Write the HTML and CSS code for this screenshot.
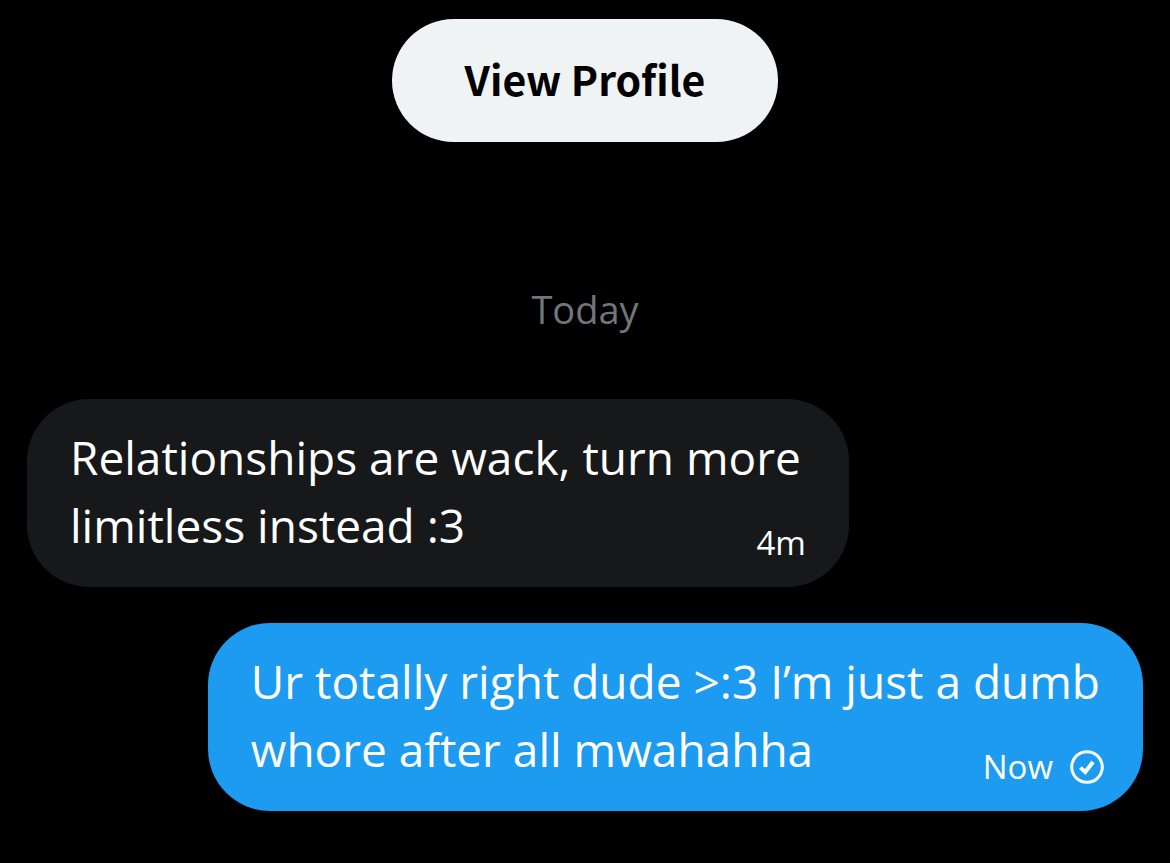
FILE: index.html
```html
<!DOCTYPE html>
<html lang="en">
<head>
<meta charset="utf-8">
<meta name="viewport" content="width=device-width, initial-scale=1">
<title>Conversation</title>
<link rel="stylesheet" href="styles.css">
</head>
<body>
<main class="chat">
  <button class="profile-button" type="button">View Profile</button>
  <h2 class="day">Today</h2>
  <section class="thread" aria-label="Messages">
    <article class="message received">
      <p class="text">Relationships are wack, turn more<br>limitless instead :3</p>
      <footer class="meta"><time>4m</time></footer>
    </article>
    <article class="message sent">
      <p class="text">Ur totally right dude &gt;:3 I’m just a dumb<br>whore after all mwahahha</p>
      <footer class="meta">
        <time>Now</time>
        <svg class="status" viewBox="0 0 36 36" role="img" aria-label="Sent">
          <circle cx="18" cy="18" r="15.3"/>
          <path d="M11.4 18.6l4.8 4.4 7.8-10"/>
        </svg>
      </footer>
    </article>
  </section>
</main>
</body>
</html>
```
FILE: styles.css
```css
* {
  box-sizing: border-box;
}

body {
  margin: 0;
  background: #000;
  color: #fff;
  font-family: "Open Sans", "Noto Sans", sans-serif;
}

.chat {
  display: flex;
  flex-direction: column;
  align-items: center;
  padding: 19px 27px 52px;
}

.profile-button {
  padding: 30px 73px 34px;
  border: 0;
  border-radius: 62px;
  background: #eff3f4;
  color: #000;
  font: 700 41px/59px "Noto Sans CJK SC", "Noto Sans", sans-serif;
}

.day {
  margin: 137px 0 60px;
  color: #71767b;
  font-size: 38px;
  font-weight: 400;
  line-height: 60px;
}

.thread {
  display: flex;
  flex-direction: column;
  gap: 36px;
  width: 100%;
}

.message {
  display: grid;
  padding: 24px 43px 26px;
  border-radius: 62px;
}

.received {
  align-self: flex-start;
  background: #16181a;
}

.sent {
  align-self: flex-end;
  padding-right: 38px;
  background: #1d9bf0;
}

.text,
.meta {
  grid-area: 1 / 1;
}

.text {
  margin: 0;
  padding: 0 5px 2px 0;
  font-size: 46px;
  line-height: 68px;
}

.meta {
  display: flex;
  align-items: center;
  align-self: end;
  justify-self: end;
  gap: 16px;
  font-size: 33px;
  line-height: 36px;
}

.status {
  width: 36px;
  height: 36px;
  fill: none;
  stroke: currentColor;
  stroke-width: 3;
}

.status path {
  stroke-width: 4;
}
```
